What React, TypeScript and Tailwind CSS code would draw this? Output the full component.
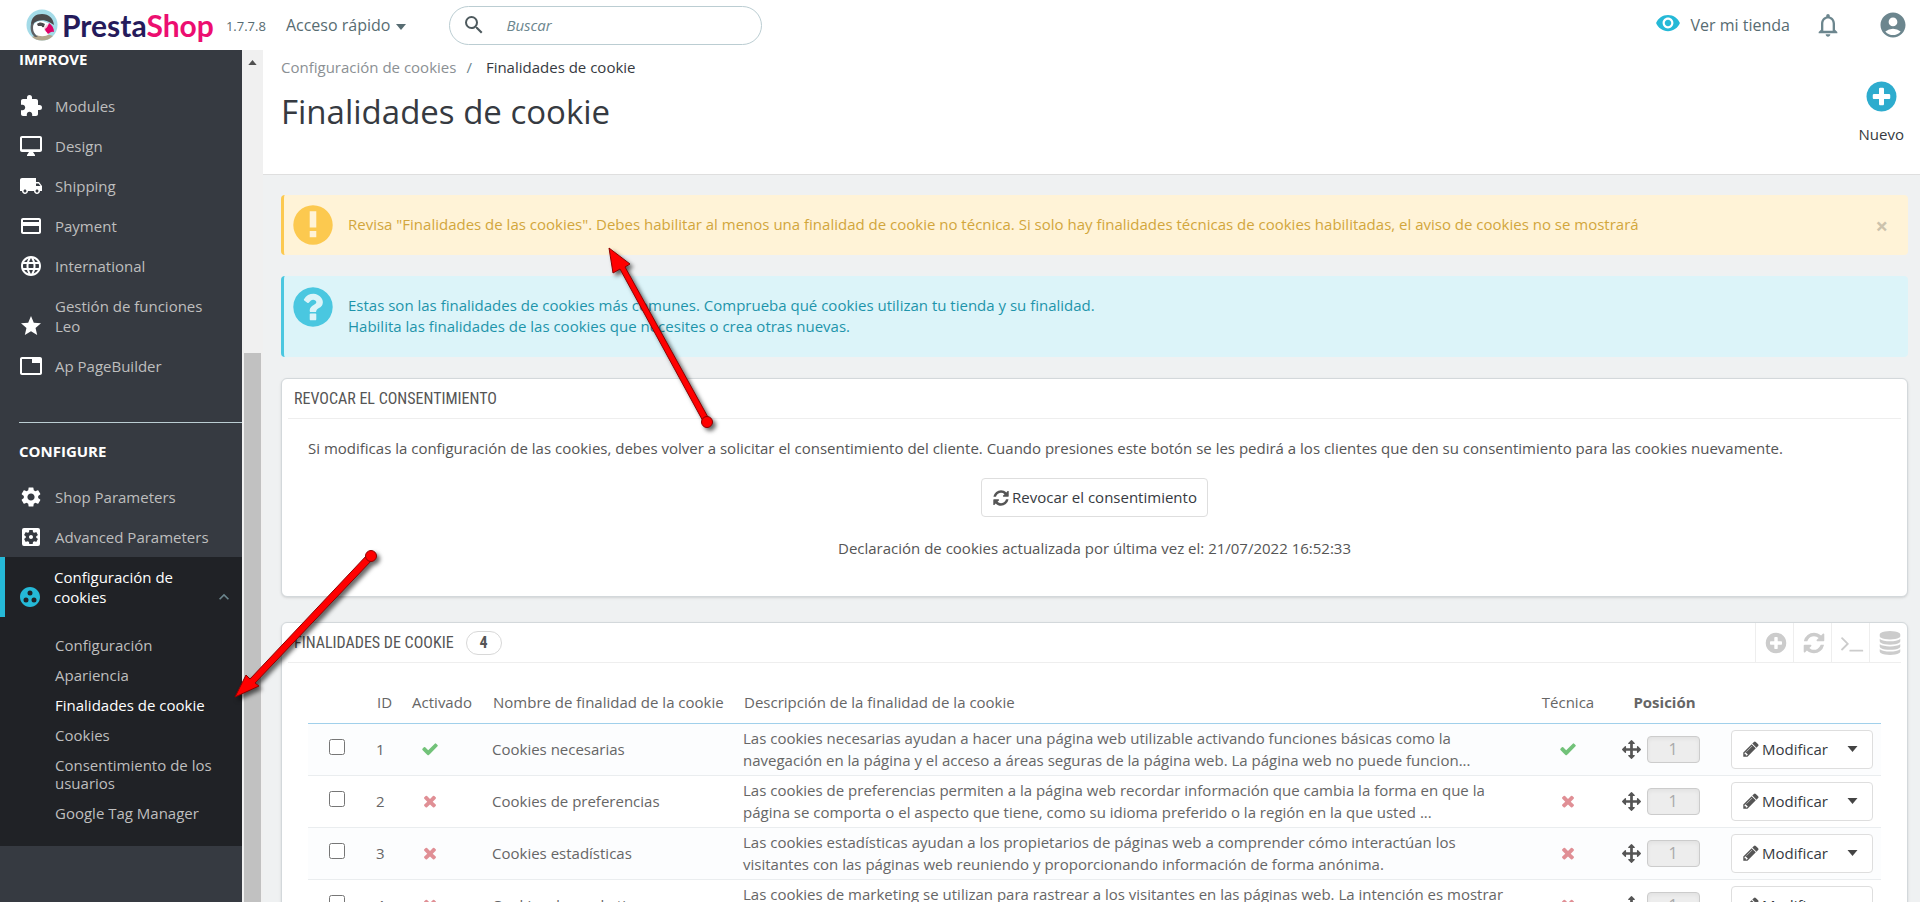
import type { ComponentType, ReactNode } from 'react';
import {
  MdAccountCircle, MdExtension, MdGroupWork, MdKeyboardArrowUp, MdLanguage, MdLocalShipping,
  MdNotificationsNone, MdPayment, MdRemoveRedEye, MdSearch, MdSettings, MdSettingsApplications, MdStar, MdTab,
} from 'react-icons/md';

const GLYPHS = {
  check: 'M1671 566q0 40-28 68l-724 724-136 136q-28 28-68 28t-68-28l-136-136-362-362q-28-28-28-68t28-68l136-136q28-28 68-28t68 28l294 295 656-657q28-28 68-28t68 28l136 136q28 28 28 68z',
  times: 'M1490 1322q0 40-28 68l-136 136q-28 28-68 28t-68-28l-294-294-294 294q-28 28-68 28t-68-28l-136-136q-28-28-28-68t28-68l294-294-294-294q-28-28-28-68t28-68l136-136q28-28 68-28t68 28l294 294 294-294q28-28 68-28t68 28l136 136q28 28 28 68t-28 68l-294 294 294 294q28 28 28 68z',
  refresh: 'M1639 1056q0 5-1 7-64 268-268 434.5t-478 166.5q-146 0-282.5-55t-243.5-157l-129 129q-19 19-45 19t-45-19-19-45v-448q0-26 19-45t45-19h448q26 0 45 19t19 45-19 45l-137 137q71 66 161 102t187 36q134 0 250-65t186-179q11-17 53-117 8-23 30-23h192q13 0 22.5 9.5t9.5 22.5zm25-800v448q0 26-19 45t-45 19h-448q-26 0-45-19t-19-45 19-45l138-138q-148-137-349-137-134 0-250 65t-186 179q-11 17-53 117-8 23-30 23h-199q-13 0-22.5-9.5t-9.5-22.5v-7q65-268 270-434.5t480-166.5q146 0 284 55.5t245 156.5l130-129q19-19 45-19t45 19 19 45z',
  plusCircle: 'M1344 960v-128q0-26-19-45t-45-19h-256v-256q0-26-19-45t-45-19h-128q-26 0-45 19t-19 45v256h-256q-26 0-45 19t-19 45v128q0 26 19 45t45 19h256v256q0 26 19 45t45 19h128q26 0 45-19t19-45v-256h256q26 0 45-19t19-45zm320-64q0 209-103 385.5t-279.5 279.5-385.5 103-385.5-103-279.5-279.5-103-385.5 103-385.5 279.5-279.5 385.5-103 385.5 103 279.5 279.5 103 385.5z',
  pencil: 'M491 1536l91-91-235-235-91 91v107h128v128h107zm523-928q0-22-22-22-10 0-17 7l-542 542q-7 7-7 17 0 22 22 22 10 0 17-7l542-542q7-7 7-17zm-54-192l416 416-832 832h-416v-416zm683 96q0 53-37 90l-166 166-416-416 166-165q36-38 90-38 53 0 91 38l235 234q37 39 37 91z',
  arrows: 'M1792 896q0 26-19 45l-256 256q-19 19-45 19t-45-19-19-45v-128h-384v384h128q26 0 45 19t19 45-19 45l-256 256q-19 19-45 19t-45-19l-256-256q-19-19-19-45t19-45 45-19h128v-384h-384v128q0 26-19 45t-45 19-45-19l-256-256q-19-19-19-45t19-45l256-256q19-19 45-19t45 19 19 45v128h384v-384h-128q-26 0-45-19t-19-45 19-45l256-256q19-19 45-19t45 19l256 256q19 19 19 45t-19 45-45 19h-128v384h384v-128q0-26 19-45t45-19 45 19l256 256q19 19 19 45z',
  terminal: 'M649 983l-466 466q-10 10-23 10t-23-10l-50-50q-10-10-10-23t10-23l393-393-393-393q-10-10-10-23t10-23l50-50q10-10 23-10t23 10l466 466q10 10 10 23t-10 23zm1079 457v64q0 14-9 23t-23 9h-960q-14 0-23-9t-9-23v-64q0-14 9-23t23-9h960q14 0 23 9t9 23z',
  database: 'M896 768q237 0 443-43t325-127v170q0 69-103 128t-280 93.5-385 34.5-385-34.5-280-93.5-103-128v-170q119 84 325 127t443 43zm0 768q237 0 443-43t325-127v170q0 69-103 128t-280 93.5-385 34.5-385-34.5-280-93.5-103-128v-170q119 84 325 127t443 43zm0-384q237 0 443-43t325-127v170q0 69-103 128t-280 93.5-385 34.5-385-34.5-280-93.5-103-128v-170q119 84 325 127t443 43zm0-1152q208 0 385 34.5t280 93.5 103 128v128q0 69-103 128t-280 93.5-385 34.5-385-34.5-280-93.5-103-128v-128q0-69 103-128t280-93.5 385-34.5z',
  question: 'M1024 1376v-192q0-14-9-23t-23-9h-192q-14 0-23 9t-9 23v192q0 14 9 23t23 9h192q14 0 23-9t9-23zm256-672q0-88-55.5-163t-138.5-116-170-41q-243 0-371 213-15 24 8 42l132 100q7 6 19 6 16 0 25-12 53-68 86-92 34-24 86-24 48 0 85.5 26t37.5 59q0 38-20 61t-68 45q-63 28-115.5 86.5t-52.5 125.5v36q0 14 9 23t23 9h192q14 0 23-9t9-23q0-19 21.5-49.5t54.5-49.5q32-18 49-28.5t46-35 44.5-48 28-60.5 12.5-81zm384 192q0 209-103 385.5t-279.5 279.5-385.5 103-385.5-103-279.5-279.5-103-385.5 103-385.5 279.5-279.5 385.5-103 385.5 103 279.5 279.5 103 385.5z',
  exclamation: 'M896 128a768 768 0 1 0 0 1536a768 768 0 1 0 0-1536zm-128 230h256v640h-256zm0 768h256v250h-256z',
};

function Glyph({ name, className }: { name: keyof typeof GLYPHS; className: string }) {
  return (
    <svg viewBox="0 0 1792 1792" className={`shrink-0 ${className}`} fill="currentColor" fillRule="evenodd" aria-hidden="true">
      <path d={GLYPHS[name]} />
    </svg>
  );
}

function Caret({ className }: { className: string }) {
  return (
    <svg viewBox="0 0 10 6" className={className} fill="currentColor" aria-hidden="true">
      <path d="M0 0h10L5 6z" />
    </svg>
  );
}

function DesktopIcon({ className }: { className?: string }) {
  return (
    <svg viewBox="0 0 24 24" className={className} fill="currentColor" aria-hidden="true">
      <path d="M21 2H3c-1.1 0-2 .9-2 2v12c0 1.1.9 2 2 2h7l-2 3v1h8v-1l-2-3h7c1.1 0 2-.9 2-2V4c0-1.1-.9-2-2-2zm0 13.3H3V4h18v11.3z" />
    </svg>
  );
}

function Logo() {
  return (
    <a href="#inicio" className="flex items-center">
      <svg viewBox="0 0 32 32" className="size-8 shrink-0" aria-hidden="true">
        <clipPath id="badge"><circle cx="16" cy="16" r="15.5" /></clipPath>
        <g clipPath="url(#badge)">
          <rect width="32" height="32" fill="#a4dbe8" />
          <path d="M6 28c6-3 15-3 21-1v5H6z" fill="#b3a78c" />
          <path d="M5 16C5 8 10 5 16 5c7 0 11 4 12 11l-5-3c-5-3-12-2-15 1l-2 5z" fill="#4b4a4c" />
          <path d="M8 15c3-3 8-4 11-2l5 2-1 10c-3 3-10 3-14 0-3-2-4-7-1-10z" fill="#fff" />
          <path d="M5 15l3-1c-2 5-1 10 4 14H9c-4-3-5-8-4-13z" fill="#5f6164" />
          <path d="M11 15c2-2 5-2 8 0l-1 2h-6z" fill="#4b4a4c" />
          <circle cx="17" cy="17" r="1.3" fill="#4b4a4c" />
          <path d="M18 19l3-4 3 3-3 5c-2 0-3-2-3-4z" fill="#f3c9da" />
          <path d="M23 14c3 2 5 5 5 9-3-1-4 1-6 2-1-2-3-3-3-5 2-1 3-3 4-6z" fill="#df0067" />
        </g>
      </svg>
      <span className="ml-1 font-[Lato] text-[30px] leading-8 font-bold text-[#251b5b]">
        Presta<span className="text-[#ec0e70]">Shop</span>
      </span>
    </a>
  );
}

function TopBar() {
  return (
    <header className="z-10 flex h-[50px] shrink-0 items-center bg-white pr-3 pl-[26px] text-[#576c72]">
      <Logo />
      <span className="mt-1 ml-3 text-[13px]">1.7.7.8</span>
      <button type="button" className="ml-5 flex items-center gap-1.5 text-base">
        Acceso rápido
        <Caret className="mt-1 h-[6px] w-[10px]" />
      </button>
      <div className="ml-[43px] flex h-[39px] w-[313px] items-center rounded-full border border-[#bbcdd2] px-3">
        <MdSearch className="size-6 text-[#4e5a5e]" aria-hidden="true" />
        <input
          type="search"
          aria-label="Buscar"
          placeholder="Buscar"
          className="ml-5 min-w-0 flex-1 text-[15px] italic outline-none placeholder:text-[#6c868e]"
        />
      </div>
      <a href="#tienda" className="ml-auto flex items-center gap-2.5 text-base">
        <MdRemoveRedEye className="mb-1 size-[26px] text-[#25b9d7]" aria-hidden="true" />
        Ver mi tienda
      </a>
      <button type="button" aria-label="Notificaciones" className="ml-6 text-[#6c868e]">
        <MdNotificationsNone className="size-7" />
      </button>
      <button type="button" aria-label="Cuenta" className="ml-9 text-[#6c868e]">
        <MdAccountCircle className="size-[30px]" />
      </button>
    </header>
  );
}

interface MenuEntry {
  label: string;
  icon: ComponentType<{ className?: string }>;
}

const IMPROVE: MenuEntry[] = [
  { label: 'Modules', icon: MdExtension },
  { label: 'Design', icon: DesktopIcon },
  { label: 'Shipping', icon: MdLocalShipping },
  { label: 'Payment', icon: MdPayment },
  { label: 'International', icon: MdLanguage },
  { label: 'Gestión de funciones Leo', icon: MdStar },
  { label: 'Ap PageBuilder', icon: MdTab },
];

const CONFIGURE: MenuEntry[] = [
  { label: 'Shop Parameters', icon: MdSettings },
  { label: 'Advanced Parameters', icon: MdSettingsApplications },
];

const SUBMENU = [
  'Configuración',
  'Apariencia',
  'Finalidades de cookie',
  'Cookies',
  'Consentimiento de los usuarios',
  'Google Tag Manager',
];

function MenuList({ entries }: { entries: MenuEntry[] }) {
  return (
    <ul>
      {entries.map(({ label, icon: Icon }) => (
        <li key={label}>
          <a href="#menu" className="flex items-end gap-3 py-2.5 pr-8 pl-[19px] text-[#bebebe]">
            <Icon className="-my-0.5 size-6 shrink-0 text-white" />
            {label}
          </a>
        </li>
      ))}
    </ul>
  );
}

function Sidebar() {
  return (
    <div className="flex shrink-0 bg-[#f0f0f0]">
      <nav className="w-[242px] overflow-hidden bg-[#363a41] text-[15px] leading-[20px]">
        <h2 className="-mt-px mb-[17px] pl-[19px] font-bold text-white">IMPROVE</h2>
        <MenuList entries={IMPROVE} />
        <hr className="mt-9 mb-[18px] ml-[19px] border-[#bbcdd2]" />
        <h2 className="mb-4 pl-[19px] font-bold text-white">CONFIGURE</h2>
        <MenuList entries={CONFIGURE} />
        <div className="bg-[#202226] pb-[18px]">
          <a href="#menu" className="flex items-end border-l-5 border-[#25b9d7] py-2.5 pr-2 pl-[13px] text-white">
            <MdGroupWork className="-mb-0.5 size-6 shrink-0 text-[#25b9d7]" aria-hidden="true" />
            <span className="ml-3 flex-1 pr-6">Configuración de cookies</span>
            <MdKeyboardArrowUp className="size-5 text-[#6c868e]" aria-hidden="true" />
          </a>
          <ul className="pt-[13px] pr-6 pl-[55px] leading-[18px]">
            {SUBMENU.map(label => (
              <li key={label}>
                <a
                  href="#submenu"
                  className={`block py-1.5 ${label === 'Finalidades de cookie' ? 'text-white' : 'text-[#bebebe]'}`}
                >
                  {label}
                </a>
              </li>
            ))}
          </ul>
        </div>
      </nav>
      <div className="flex w-[21px] flex-col items-center" aria-hidden="true">
        <Caret className="mt-2.5 h-[5px] w-[9px] rotate-180 text-[#505050]" />
        <div className="mt-[288px] w-[17px] flex-1 bg-[#c1c1c1]" />
      </div>
    </div>
  );
}

function PageHead() {
  return (
    <div className="flex h-[125px] items-start justify-between border-b border-[#dfdfdf] bg-white pr-4 pl-[18px]">
      <div>
        <nav className="flex gap-2.5 pt-[7px] text-[15px] leading-5 text-[#363a41]">
          <a href="#configuracion" className="text-[#8b9094]">Configuración de cookies</a>
          <span className="text-[#6c868e]">/</span>
          <span className="ml-1">Finalidades de cookie</span>
        </nav>
        <h1 className="mt-[13px] text-[33px] leading-[44px] font-normal text-[#363a41]">Finalidades de cookie</h1>
      </div>
      <a href="#nuevo" className="flex flex-col items-center pt-[29px] text-[15px] text-[#363a41]">
        <Glyph name="plusCircle" className="size-[35px] text-[#2eacce]" />
        <span className="mt-2.5 leading-5">Nuevo</span>
      </a>
    </div>
  );
}

function Panel({ title, actions, children }: { title: ReactNode; actions?: ReactNode; children: ReactNode }) {
  return (
    <section className="rounded-md border border-[#d3d8db] bg-white px-1.5 shadow-sm">
      <div className="flex h-10 items-center border-b border-[#eeeeee] pl-1.5">
        <h2 className="flex items-center gap-3 font-['Ubuntu_Condensed','Roboto_Condensed','Open_Sans_Condensed','Noto_Sans_Condensed',Roboto,sans-serif] text-base font-normal text-[#555555] uppercase">
          {title}
        </h2>
        {actions}
      </div>
      {children}
    </section>
  );
}

const PURPOSES = [
  {
    id: 1,
    enabled: true,
    name: 'Cookies necesarias',
    text: 'Las cookies necesarias ayudan a hacer una página web utilizable activando funciones básicas como la navegación en la página y el acceso a áreas seguras de la página web. La página web no puede funcion...',
  },
  {
    id: 2,
    enabled: false,
    name: 'Cookies de preferencias',
    text: 'Las cookies de preferencias permiten a la página web recordar información que cambia la forma en que la página se comporta o el aspecto que tiene, como su idioma preferido o la región en la que usted ...',
  },
  {
    id: 3,
    enabled: false,
    name: 'Cookies estadísticas',
    text: 'Las cookies estadísticas ayudan a los propietarios de páginas web a comprender cómo interactúan los visitantes con las páginas web reuniendo y proporcionando información de forma anónima.',
  },
  {
    id: 4,
    enabled: false,
    name: 'Cookies de marketing',
    text: 'Las cookies de marketing se utilizan para rastrear a los visitantes en las páginas web. La intención es mostrar anuncios relevantes y atractivos para el usuario individual.',
  },
];

function Status({ on }: { on: boolean }) {
  return on
    ? <Glyph name="check" className="mx-auto size-[18px] text-[#72c279]" />
    : <Glyph name="times" className="mx-auto size-[18px] text-[#e08f95]" />;
}

function PurposesTable() {
  return (
    <table className="w-full table-fixed text-left text-[#666666]">
      <thead>
        <tr className="h-10 border-b border-[#a0d0eb] *:pb-0.5">
          <th className="w-[58px]" />
          <th className="w-9 pl-[11px] font-normal">ID</th>
          <th className="w-20 text-center font-normal">Activado</th>
          <th className="w-[251px] pl-[11px] font-normal">Nombre de finalidad de la cookie</th>
          <th className="pl-[11px] font-normal">Descripción de la finalidad de la cookie</th>
          <th className="w-20 text-center font-normal">Técnica</th>
          <th className="w-[113px] text-center font-bold">Posición</th>
          <th className="w-[160px]" />
        </tr>
      </thead>
      <tbody>
        {PURPOSES.map(({ id, enabled, name, text }) => (
          <tr key={id} className="h-13 border-b border-[#eaedef] odd:bg-[#fcfdfe]">
            <td className="pb-2 text-center">
              <input type="checkbox" aria-label={name} className="size-4 align-middle" />
            </td>
            <td className="pl-2.5">{id}</td>
            <td className="pr-6"><Status on={enabled} /></td>
            <td className="pl-2.5">{name}</td>
            <td className="pl-2.5 leading-[22px]"><p className="max-w-[772px]">{text}</p></td>
            <td><Status on={enabled} /></td>
            <td>
              <div className="flex items-center justify-center gap-1.5 pr-2">
                <Glyph name="arrows" className="size-[19px] text-[#555555]" />
                <span className="flex h-[27px] w-[53px] items-center justify-center rounded-sm border border-[#cccccc] bg-[#ededed] text-base text-[#aaaaaa] shadow-inner">
                  1
                </span>
              </div>
            </td>
            <td className="pr-2 pl-2.5">
              <div className="flex h-[39px] rounded-sm border border-[#dedede] bg-white text-[#363a41]">
                <button type="button" className="flex flex-1 items-center gap-0.5 pl-2.5">
                  <Glyph name="pencil" className="size-[18px] text-[#555555]" />
                  Modificar
                </button>
                <button type="button" aria-label="Más acciones" className="px-3.5 text-[#444444]">
                  <Caret className="h-[6px] w-[11px]" />
                </button>
              </div>
            </td>
          </tr>
        ))}
      </tbody>
    </table>
  );
}

const TOOLS: { label: string; icon: keyof typeof GLYPHS }[] = [
  { label: 'Añadir', icon: 'plusCircle' },
  { label: 'Recargar', icon: 'refresh' },
  { label: 'Mostrar consulta SQL', icon: 'terminal' },
  { label: 'Exportar al gestor SQL', icon: 'database' },
];

function PanelTools() {
  return (
    <div className="-mr-1.5 ml-auto flex h-full">
      {TOOLS.map(({ label, icon }) => (
        <button key={label} type="button" aria-label={label} className="w-[38px] border-l border-[#eeeeee] pl-2 text-[#cccccc]">
          <Glyph name={icon} className="size-6" />
        </button>
      ))}
    </div>
  );
}

// Red callouts drawn over the page
function Callouts() {
  return (
    <svg className="pointer-events-none absolute top-0 left-0 z-20 h-[902px] w-[1920px]" aria-hidden="true">
      <g
        fill="#ff0000"
        stroke="#8c0000"
        strokeWidth="1"
        className="drop-shadow-[3px_3px_2px_rgba(0,0,0,0.6)]"
      >
        <path d="M609 248L630 264L625 267L709 419L704 423L620 269L613 273Z" />
        <circle cx="707" cy="422" r="5.5" />
        <path d="M235 697L246 675L250 679L368 554L373 559L255 683L259 686Z" />
        <circle cx="371" cy="556" r="5.5" />
      </g>
    </svg>
  );
}

export default function App() {
  return (
    <div className="relative flex h-screen flex-col overflow-hidden bg-[#eff1f2] font-['Open_Sans',sans-serif]">
      <TopBar />
      <div className="flex min-h-0 flex-1">
        <Sidebar />
        <main className="min-w-0 flex-1 overflow-hidden text-[15px]">
          <PageHead />
          <div className="flex flex-col gap-[21px] pt-5 pr-3 pl-[18px]">
            <div className="flex h-[60px] items-center rounded-sm border-l-3 border-[#fcc94f] bg-[#fff3d7] pr-5 text-[#d2a63c]">
              <Glyph name="exclamation" className="mx-1.5 size-[46px] text-[#fcc94f]" />
              <p className="ml-1.5 flex-1 pb-0.5">
                Revisa "Finalidades de las cookies". Debes habilitar al menos una finalidad de cookie no técnica. Si solo hay
                finalidades técnicas de cookies habilitadas, el aviso de cookies no se mostrará
              </p>
              <button type="button" aria-label="Cerrar" className="text-[22px] leading-5 font-bold text-[#ccc2ac]">×</button>
            </div>
            <div className="flex items-start rounded-sm border-l-3 border-[#4ac7e0] bg-[#dcf4f9] pt-2 pb-5 text-[#1e94ab]">
              <Glyph name="question" className="mx-1.5 size-[46px] text-[#4ac7e0]" />
              <p className="ml-1.5 pt-[11px] leading-[21px]">
                Estas son las finalidades de cookies más comunes. Comprueba qué cookies utilizan tu tienda y su finalidad.
                <br />
                Habilita las finalidades de las cookies que necesites o crea otras nuevas.
              </p>
            </div>
            <Panel title="Revocar el consentimiento">
              <div className="flex flex-col items-center pt-[19px] pb-[38px] text-[#555555]">
                <p className="w-full pl-5 leading-5">
                  Si modificas la configuración de las cookies, debes volver a solicitar el consentimiento del cliente. Cuando
                  presiones este botón se les pedirá a los clientes que den su consentimiento para las cookies nuevamente.
                </p>
                <button
                  type="button"
                  className="mt-5 flex h-[39px] items-center gap-0.5 rounded-sm border border-[#dedede] px-2.5 text-[#363a41]"
                >
                  <Glyph name="refresh" className="size-[18px] text-[#555555]" />
                  Revocar el consentimiento
                </button>
                <p className="mt-[21px] leading-5">Declaración de cookies actualizada por última vez el: 21/07/2022 16:52:33</p>
              </div>
            </Panel>
            <div className="mt-1">
              <Panel
                title={
                  <>
                    Finalidades de cookie
                    <span className="rounded-full border border-[#d8d8d8] px-[13px] leading-[22px] font-bold">4</span>
                  </>
                }
                actions={<PanelTools />}
              >
                <div className="px-5 pt-5">
                  <PurposesTable />
                </div>
              </Panel>
            </div>
          </div>
        </main>
      </div>
      <Callouts />
    </div>
  );
}
